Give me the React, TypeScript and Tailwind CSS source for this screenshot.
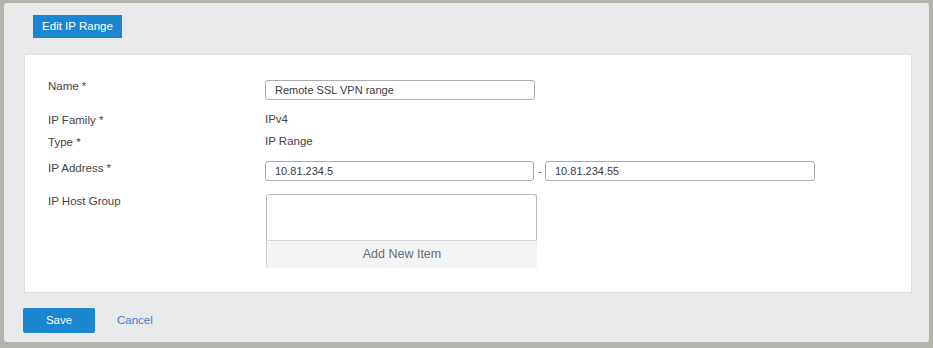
import React from 'react';

const font = { fontFamily: '"Liberation Sans", Arial, sans-serif' };

const Label = ({ children }: { children: React.ReactNode }) => (
  <div className="w-[217px] shrink-0 text-[11.5px] leading-[14px] text-[#444]">{children}</div>
);

const TextBox = ({ value, className = '' }: { value: string; className?: string }) => (
  <div className={`h-[20px] rounded-[3px] border border-[#a9abae] bg-white pl-[9px] text-[11px] leading-[18px] text-[#3a3a3a] ${className}`}>
    {value}
  </div>
);

export default function App() {
  return (
    <div className="w-[933px] h-[348px] bg-[#b4b4ad] pt-[3px] pl-[4px] pr-[4px] pb-[6px]" style={font}>
      <div className="flex h-full flex-col rounded-[3px] bg-[#e8e9eb]">
        <div className="ml-[29px] mt-[12px] flex h-[23px] w-[89px] items-center justify-center bg-[#1a87d0] text-[11.5px] text-white">
          Edit IP Range
        </div>

        <div className="ml-[20px] mr-[17px] mt-[16px] h-[239px] border border-[#dcdee1] bg-white pl-[23px] pt-[25px]">
          <div className="flex h-[20px]">
            <div className="-mt-[1px]"><Label>Name *</Label></div>
            <TextBox value="Remote SSL VPN range" className="w-[270px]" />
          </div>

          <div className="mt-[12px] flex h-[16px] items-center">
            <Label>IP Family *</Label>
            <div className="text-[11.5px] text-[#444]">IPv4</div>
          </div>

          <div className="mt-[6px] flex h-[16px] items-center">
            <Label>Type *</Label>
            <div className="text-[11.5px] text-[#444]">IP Range</div>
          </div>

          <div className="mt-[11px] flex h-[20px]">
            <Label>IP Address *</Label>
            <TextBox value="10.81.234.5" className="w-[269px]" />
            <div className="w-[11px] text-center text-[11px] leading-[20px] text-[#555]">-</div>
            <TextBox value="10.81.234.55" className="w-[270px]" />
          </div>

          <div className="mt-[13px] flex">
            <Label>IP Host Group</Label>
            <div className="ml-[1px] flex h-[74px] w-[271px] flex-col">
              <div className="flex-1 rounded-t-[3px] border-l border-t border-r border-[#b9bbbe] bg-white" />
              <div className="flex h-[28px] items-center justify-center rounded-bl-[3px] border-l border-t border-l-[#c9cbce] border-t-[#d4d6d9] bg-[#f3f4f6] text-[12.5px] text-[#6b6b6b]">
                Add New Item
              </div>
            </div>
          </div>
        </div>

        <div className="ml-[19px] mt-[15px] flex items-center">
          <div className="flex h-[25px] w-[72px] items-center justify-center rounded-[2px] bg-[#1a87d0] text-[11.5px] text-white">
            Save
          </div>
          <div className="ml-[22px] text-[11.5px] text-[#3d7cc9]">Cancel</div>
        </div>
      </div>
    </div>
  );
}
